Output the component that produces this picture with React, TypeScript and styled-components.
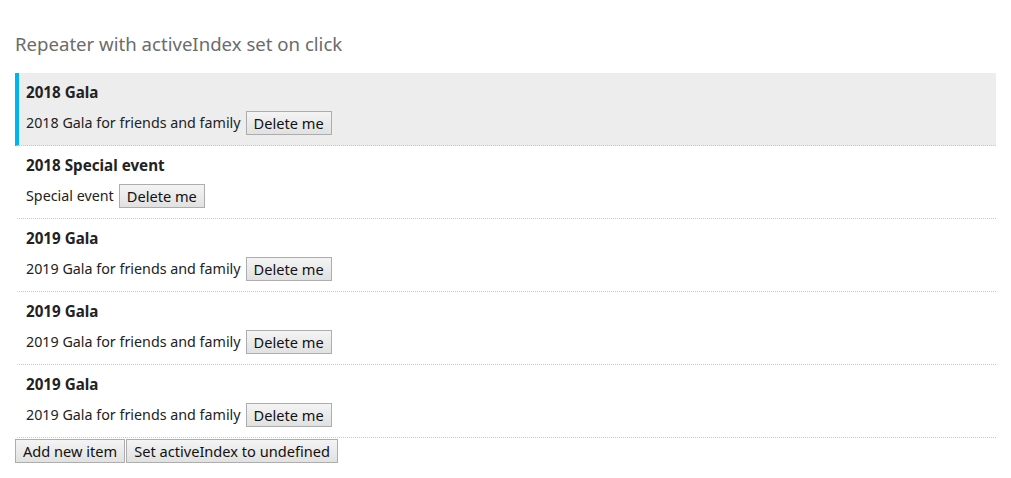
import React, { useState } from "react";
import styled, { createGlobalStyle } from "styled-components";

const Global = createGlobalStyle`
  body { margin: 0; background: #fff; font-family: "Noto Sans", "Open Sans", sans-serif; color: #222; }
`;

const Page = styled.div`
  padding: 30px 15px 15px 15px;
`;

const Title = styled.h3`
  margin: 0 0 15px 0;
  font-size: 18.6px;
  font-weight: 400;
  color: #6b6b6b;
  line-height: 28px;
`;

const List = styled.div`
  display: flex;
  flex-direction: column;
`;

const Item = styled.div<{ $active: boolean }>`
  height: 73px;
  box-sizing: border-box;
  border-bottom: 1px dotted #c8c8c8;
  border-left: 4px solid ${(p) => (p.$active ? "#00b4f0" : "transparent")};
  background: ${(p) => (p.$active ? "#ededed" : "#fff")};
  padding: 9px 7px 0 7px;
  cursor: pointer;
`;

const ItemTitle = styled.div`
  font-size: 15.2px;
  font-weight: 700;
  line-height: 20px;
  color: #222;
`;

const ItemRow = styled.div`
  margin-top: 9px;
  display: flex;
  align-items: center;
  gap: 5px;
  font-size: 14.3px;
  line-height: 24px;
`;

const Button = styled.button`
  height: 24px;
  box-sizing: border-box;
  padding: 0 7px;
  font-family: "Noto Sans", "Open Sans", sans-serif;
  font-size: 14.6px;
  color: #111;
  background: linear-gradient(#f4f4f4, #e1e1e1);
  border: 1px solid #adadad;
  border-radius: 0;
  line-height: 20px;
`;

const Footer = styled.div`
  display: flex;
  gap: 1px;
  margin-top: 1px;
`;

const initial = [
  { title: "2018 Gala", desc: "2018 Gala for friends and family" },
  { title: "2018 Special event", desc: "Special event" },
  { title: "2019 Gala", desc: "2019 Gala for friends and family" },
  { title: "2019 Gala", desc: "2019 Gala for friends and family" },
  { title: "2019 Gala", desc: "2019 Gala for friends and family" },
];

export default function App() {
  const [items, setItems] = useState(initial);
  const [active, setActive] = useState<number | undefined>(0);
  return (
    <Page>
      <Global />
      <Title>Repeater with activeIndex set on click</Title>
      <List>
        {items.map((it, i) => (
          <Item key={i} $active={active === i} onClick={() => setActive(i)}>
            <ItemTitle>{it.title}</ItemTitle>
            <ItemRow>
              <span>{it.desc}</span>
              <Button
                onClick={(e) => {
                  e.stopPropagation();
                  setItems(items.filter((_, j) => j !== i));
                }}
              >
                Delete me
              </Button>
            </ItemRow>
          </Item>
        ))}
      </List>
      <Footer>
        <Button onClick={() => setItems([...items, { title: "2019 Gala", desc: "2019 Gala for friends and family" }])}>
          Add new item
        </Button>
        <Button onClick={() => setActive(undefined)}>Set activeIndex to undefined</Button>
      </Footer>
    </Page>
  );
}
